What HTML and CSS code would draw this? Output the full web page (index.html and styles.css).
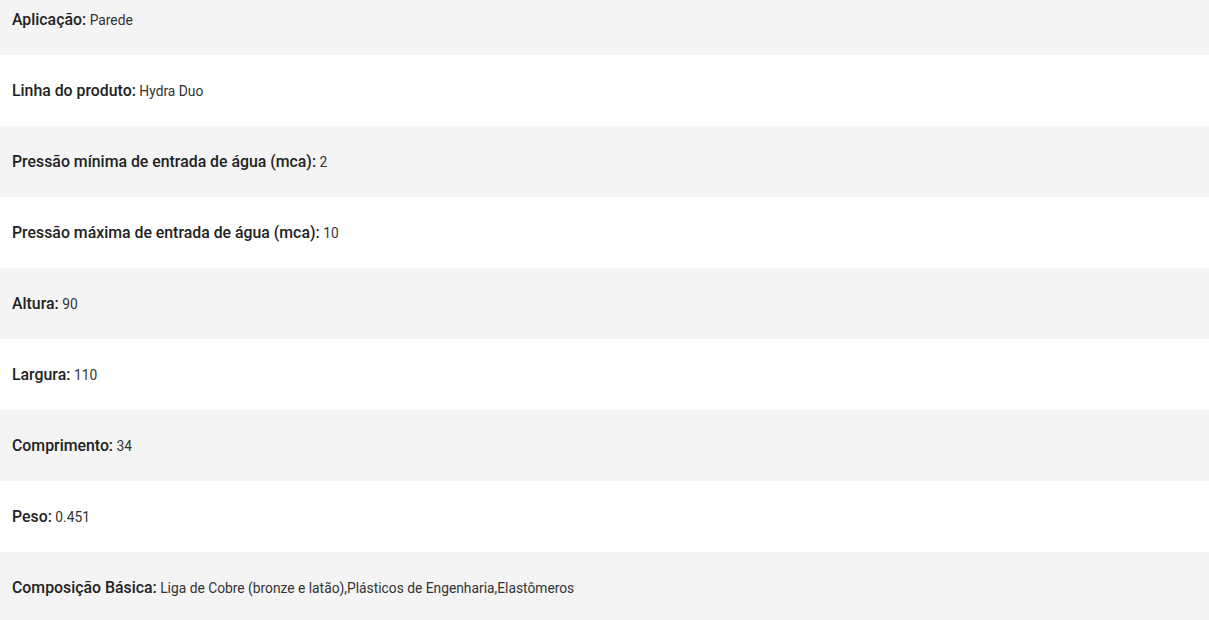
FILE: index.html
```html
<!DOCTYPE html>
<html lang="pt">
<head>
<meta charset="utf-8">
<link rel="stylesheet" href="styles.css">
</head>
<body>
<div class="specs">
  <div class="row"><span class="label">Aplicação:</span><span class="value">Parede</span></div>
  <div class="row"><span class="label">Linha do produto:</span><span class="value">Hydra Duo</span></div>
  <div class="row"><span class="label">Pressão mínima de entrada de água (mca):</span><span class="value">2</span></div>
  <div class="row"><span class="label">Pressão máxima de entrada de água (mca):</span><span class="value">10</span></div>
  <div class="row"><span class="label">Altura:</span><span class="value">90</span></div>
  <div class="row"><span class="label">Largura:</span><span class="value">110</span></div>
  <div class="row"><span class="label">Comprimento:</span><span class="value">34</span></div>
  <div class="row"><span class="label">Peso:</span><span class="value">0.451</span></div>
  <div class="row"><span class="label">Composição Básica:</span><span class="value">Liga de Cobre (bronze e latão),Plásticos de Engenharia,Elastômeros</span></div>
</div>
</body>
</html>
```
FILE: styles.css
```css
html, body {
  margin: 0;
  padding: 0;
  background: #fff;
  overflow: hidden;
}
body {
  font-family: Roboto, "Liberation Sans", sans-serif;
}
.specs {
  margin-top: -16px;
  display: flex;
  flex-direction: column;
}
.row {
  height: 71px;
  display: flex;
  align-items: center;
  gap: 3.5px;
  padding-left: 12px;
}
.row:nth-child(odd) {
  background: #f4f4f4;
}
.label {
  font-size: 15.85px;
  font-weight: 500;
  color: #222;
}
.value {
  font-size: 13.8px;
  color: #333;
}
```
